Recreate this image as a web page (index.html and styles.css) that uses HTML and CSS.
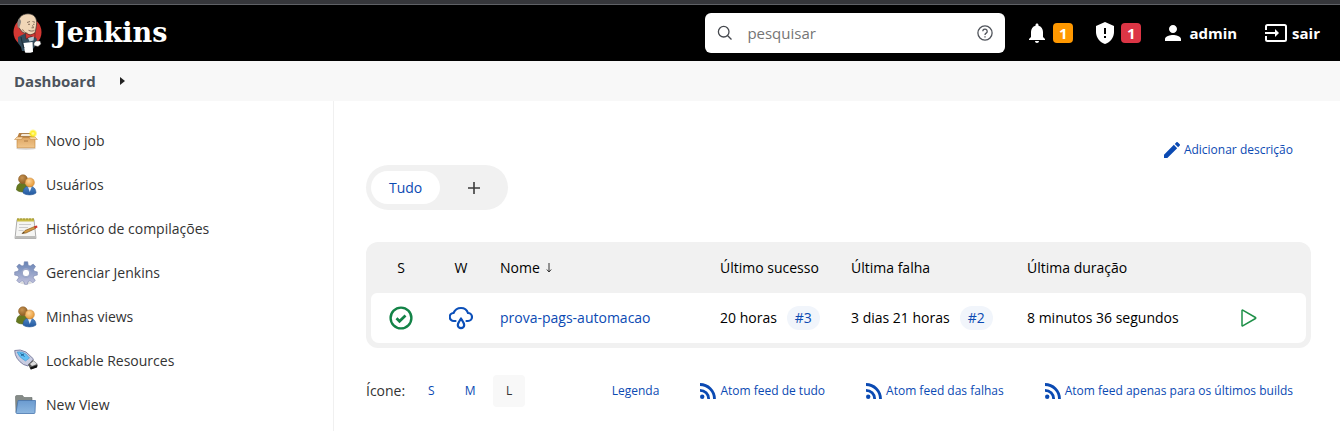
FILE: index.html
```html
<!DOCTYPE html>
<html lang="pt-BR">
<head>
<meta charset="utf-8">
<meta name="viewport" content="width=device-width, initial-scale=1">
<title>Dashboard [Jenkins]</title>
<link rel="stylesheet" href="styles.css">
</head>
<body>
<svg class="defs" width="0" height="0" aria-hidden="true">
  <defs>
    <radialGradient id="brown" cx=".4" cy=".35" r=".7"><stop offset="0" stop-color="#c99452"/><stop offset="1" stop-color="#8a5a1e"/></radialGradient>
    <radialGradient id="peach" cx=".4" cy=".35" r=".7"><stop offset="0" stop-color="#ffd596"/><stop offset="1" stop-color="#e3932f"/></radialGradient>
    <linearGradient id="blue" x1="0" y1="0" x2="0" y2="1"><stop offset="0" stop-color="#4d85c4"/><stop offset="1" stop-color="#2359a0"/></linearGradient>
    <linearGradient id="folder" x1="0" y1="0" x2="0" y2="1"><stop offset="0" stop-color="#6b9bd0"/><stop offset="1" stop-color="#8db7e0"/></linearGradient>
    <linearGradient id="steel" x1="0" y1="0" x2="0" y2="1"><stop offset="0" stop-color="#6683b5"/><stop offset="1" stop-color="#c3c2dc"/></linearGradient>
    <linearGradient id="carton" x1="0" y1="0" x2="0" y2="1"><stop offset="0" stop-color="#dda664"/><stop offset="1" stop-color="#f1c68b"/></linearGradient>
    <radialGradient id="glow"><stop offset="0" stop-color="#fffbb0"/><stop offset=".5" stop-color="#ffee20"/><stop offset="1" stop-color="#ffee20" stop-opacity="0"/></radialGradient>
    <symbol id="people" viewBox="0 0 24 24">
      <path d="M2.500 17c0-4 1.500-7 5.500-7s6 3 6 7c-3 2.500-8.500 2.500-11.500 0z" fill="#66791f" stroke="#4b5f12" stroke-width=".6"/>
      <circle cx="9" cy="6.200" r="4.500" fill="url(#brown)" stroke="#8f6230" stroke-width=".5"/>
      <path d="M9 20c0-4.500 2.500-7 6.500-7s6.500 3 6.500 7c-3 2.500-10 2.500-13 0z" fill="url(#blue)" stroke="#2d5a97" stroke-width=".6"/>
      <path d="M14 14l1.800 5 1.800-5z" fill="#edf3fa"/>
      <circle cx="15.800" cy="9.500" r="4.600" fill="url(#peach)" stroke="#c98534" stroke-width=".5"/>
    </symbol>
    <symbol id="rss" viewBox="0 0 16 16">
      <circle cx="2.200" cy="13.800" r="2.200"/>
      <path d="M0 7.300c4.800 0 8.700 3.900 8.700 8.700M0 1.500C8 1.500 14.500 8 14.500 16" fill="none" stroke="currentColor" stroke-width="2.800"/>
    </symbol>
  </defs>
</svg>

<div class="window-edge"></div>
<header class="header">
  <a class="brand" href="#">
    <svg width="29" height="40" viewBox="0 0 29 40" aria-hidden="true">
      <ellipse cx="14.500" cy="19" rx="14" ry="14.500" fill="#d33833"/>
      <path d="M5 24l6-3 9 1 4 4-1 6-3 4v2H9l-1-4-3-4z" fill="#334c5c"/>
      <path d="M5.500 14C3.500 5 9 .8 15 .8c6 0 9.500 4.200 8.500 11.200l-1 6c-1 4-4 4.500-7.500 3.500-4-1-7-3-8-5.500z" fill="#f0d6b7" stroke="#33302e" stroke-width=".7"/>
      <path d="M6 5.500c2.500 1.500 2.500 3.500 1.500 5.500l-1 3-1.500 1C4 11 4 8 6 5.500z" fill="#8e8a85"/>
      <path d="M14 9.500l3-1m2.500 0l2.500.8m-7 2h2m3 0h1.500m-2 1l1 2.500h-2m-3 2.500c2 1 4.500 1 6 0m-12-1c1 2.500 3 3.500 5 4" fill="none" stroke="#6b5546" stroke-width=".8"/>
      <path d="M12.500 20l4.500 2 5-2v5l-4-1.500-5 2.500z" fill="#d33833" stroke="#421c19" stroke-width=".5"/>
      <path d="M15 25l6-1.500-.5 4-4 1z" fill="#b6c7d0"/>
      <path d="M10.500 30l9-1 .5 10c-3 1-6 1-8 .5z" fill="#fff"/>
      <path d="M21 30l2-2h4l1 3-3 2.500-4-1z" fill="#fff" stroke="#555" stroke-width=".5"/>
      <path d="M8 24l1.500 7 1.500 4" fill="none" stroke="#1d2c37"/>
    </svg>
    <span>Jenkins</span>
  </a>
  <form class="search" role="search">
    <svg width="16" height="16" viewBox="0 0 16 16" fill="none" stroke="#45484e" stroke-width="1.300" aria-hidden="true"><circle cx="6.700" cy="6.700" r="5.300"/><path d="M10.700 10.700L14.500 14.500"/></svg>
    <input type="search" placeholder="pesquisar" aria-label="pesquisar">
    <a href="#" aria-label="Ajuda"><svg width="16" height="16" viewBox="0 0 16 16" fill="none" stroke="#50545b" stroke-width="1.300"><circle cx="8" cy="8" r="7.100"/><path d="M5.800 6.300a2.200 2.200 0 1 1 3.400 1.800C8.300 8.700 8 9 8 9.900"/><path d="M8 11.200v1.300"/></svg></a>
  </form>
  <nav class="account">
    <a class="alert" href="#" aria-label="Notificações">
      <svg width="16" height="20" viewBox="4 2 16 20" fill="#fff"><path d="M12 22c1.100 0 2-.9 2-2h-4c0 1.100.9 2 2 2zm6-6v-5c0-3.070-1.640-5.640-4.500-6.320V4c0-.83-.67-1.500-1.500-1.500s-1.500.67-1.500 1.500v.68C7.630 5.360 6 7.920 6 11v5l-2 2v1h16v-1l-2-2z"/></svg>
      <span class="badge warning">1</span>
    </a>
    <a class="alert shield" href="#" aria-label="Alertas de segurança">
      <svg width="20" height="22" viewBox="0 0 20 22"><path d="M10 0L1 4v6c0 5.500 3.800 10.700 9 12 5.200-1.300 9-6.500 9-12V4z" fill="#fff"/><path d="M9 6h2v6H9zm0 8h2v2H9z" fill="#000"/></svg>
      <span class="badge danger">1</span>
    </a>
    <a class="user" href="#"><svg width="16" height="16" viewBox="4 4 16 16" fill="#fff" aria-hidden="true"><path d="M12 12c2.210 0 4-1.790 4-4s-1.790-4-4-4-4 1.790-4 4 1.790 4 4 4zm0 2c-2.670 0-8 1.340-8 4v2h16v-2c0-2.660-5.330-4-8-4z"/></svg>admin</a>
    <a class="logout" href="#"><svg width="22" height="18" viewBox="0 0 22 18" fill="none" stroke="#fff" stroke-width="2" aria-hidden="true"><path d="M1 6V2.500Q1 1 2.500 1h17Q21 1 21 2.500v13q0 1.500-1.500 1.500h-17Q1 17 1 15.500V12M0 9h13"/><path d="M10 5l4 4-4 4z" fill="#fff" stroke="none"/></svg>sair</a>
  </nav>
</header>
<nav class="breadcrumb" aria-label="Trilha">
  <a href="#">Dashboard</a>
  <svg width="5" height="8" viewBox="0 0 5 8" aria-hidden="true"><path d="M0 0l5 4-5 4z" fill="#222"/></svg>
</nav>

<div class="layout">
  <aside class="sidebar">
    <ul class="tasks">
      <li><a href="#">
        <svg width="24" height="24" viewBox="0 0 24 24" aria-hidden="true"><ellipse cx="12" cy="19.500" rx="10" ry="1.500" fill="#ddd"/><path d="M5 4h14l2 5H3z" fill="#b98142"/><path d="M7.500 4.500h8.500l2 3H6z" fill="#f4e9d8" stroke="#925e23" stroke-width=".6"/><path d="M3 8.500h18v10.300H3z" fill="url(#carton)" stroke="#c08339" stroke-width=".6"/><path d="M3 8L.5 10.500h7L9 8zm18 0l2.500 2.500h-7L15 8z" fill="#f6d5a6" stroke="#c08339" stroke-width=".5"/><path d="M10 11h4v2h-4z" fill="#c9965a"/><circle cx="19" cy="4.500" r="4.500" fill="url(#glow)"/></svg>Novo job</a></li>
      <li><a href="#"><svg width="24" height="24" aria-hidden="true"><use href="#people"/></svg>Usuários</a></li>
      <li><a href="#">
        <svg width="24" height="24" viewBox="0 0 24 24" aria-hidden="true"><path d="M3 2.500h17l2 19H1z" fill="#f5f5f3" stroke="#999" stroke-width=".8"/><path d="M1.500 19h20l.5 2.500H1z" fill="#bcbcba"/><path d="M3 1.500h17v3H3z" fill="#c9bc45"/><path d="M4 1v2m3-2v2m3-2v2m3-2v2m3-2v2m3-2v2" stroke="#8b8230" stroke-width=".8"/><path d="M5 7.500h12M5 10.500h9M4.500 13.500h5" stroke="#ccc"/><path d="M8 16.500l3-3 9.500-4 1 2-9.500 4.500z" fill="#d49a45" stroke="#785016" stroke-width=".6"/><path d="M20 9.300l3-.8.5 2-2.500 1z" fill="#cf382e"/><path d="M8 16.500l2-1.500.5 1z" fill="#222"/></svg>Histórico de compilações</a></li>
      <li><a href="#">
        <svg width="24" height="24" viewBox="0 0 24 24" aria-hidden="true"><ellipse cx="12" cy="22" rx="6" ry="1.500" fill="#ddd"/><path fill-rule="evenodd" d="M10.300.8h3.400l.5 3.500 2 .8 3-2 2.300 2.400-2 2.900.8 1.900 3 .6v3.200l-3.200.6-.8 2 2 2.800-2.400 2.300-2.900-2-2 .8-.6 2.700h-2.800l-.7-2.700-1.900-.8-2.900 2-2.300-2.400 2-2.800-.8-1.900-3.300-.6v-3.200l3.300-.6.8-2-2-2.800L5.100 3.100l2.900 2 1.900-.8zM12 8.300a3.700 3.700 0 1 0 0 7.400 3.700 3.700 0 0 0 0-7.400z" fill="url(#steel)" stroke="#7583ad" stroke-width=".6"/><circle cx="12" cy="12" r="4.500" fill="none" stroke="#99a5ca"/></svg>Gerenciar Jenkins</a></li>
      <li><a href="#"><svg width="24" height="24" aria-hidden="true"><use href="#people"/></svg>Minhas views</a></li>
      <li><a href="#">
        <svg width="24" height="24" viewBox="0 0 24 24" aria-hidden="true"><path d="M.7 1.500Q6-.2 12 3l7.500 7-5.500 7-4.500-1.500Q1 10 .7 1.500z" fill="#c9cce0" stroke="#666990" stroke-width=".8"/><path d="M3 3q5-1 9 2l3.500 4-4 3Q5 8.500 3 3z" fill="#62c0f5" stroke="#3b8cc7" stroke-width=".5"/><path d="M6.500 4.500l4 3M7 6.500l3-1.500" stroke="#124b7d" stroke-width=".8"/><path d="M14 15.500l5-4.500 4.500 4-.5 3-6.500 2.500z" fill="#5c5c5c"/><path d="M16 15l3.500-3 3.500 3-5 2z" fill="#ddd"/><path d="M16 18.500l7.500-2.500-.5 2.500-6 2z" fill="#111"/></svg>Lockable Resources</a></li>
      <li><a href="#">
        <svg width="24" height="24" viewBox="0 0 24 24" aria-hidden="true"><path d="M1.500 4q0-1.500 1-1.500h6l1.500 2h8v15h-16z" fill="#858b88" stroke="#636966" stroke-width=".6"/><path d="M4 7.500h17.500L21 19.500q0 1-1 1H3q-1 0-1-1z" fill="url(#folder)" stroke="#4875ad" stroke-width=".8"/></svg>New View</a></li>
    </ul>
  </aside>

  <main class="main">
    <div class="description"><a href="#"><svg width="16" height="16" viewBox="3 3 18 18" fill="currentColor" aria-hidden="true"><path d="M3 17.250V21h3.750L17.810 9.940l-3.750-3.750L3 17.250zM20.710 7.040a1 1 0 0 0 0-1.410l-2.340-2.340a1 1 0 0 0-1.410 0l-1.830 1.830 3.750 3.750 1.830-1.830z"/></svg>Adicionar descrição</a></div>
    <nav class="tabs" aria-label="Views">
      <a class="tab active" href="#">Tudo</a>
      <a class="tab" href="#" aria-label="New View"><svg width="12" height="12" viewBox="0 0 12 12"><path d="M6 0v12M0 6h12" stroke="#3c3c3c" stroke-width="1.600"/></svg></a>
    </nav>
    <div class="jobs">
      <table>
        <colgroup><col class="icon"><col class="icon"><col><col class="success"><col class="failure"><col class="duration"><col class="action"></colgroup>
        <thead><tr><th class="center">S</th><th class="center">W</th><th><span class="sort">Nome <svg width="6" height="10" viewBox="0 0 6 10" fill="none" stroke="#333" aria-hidden="true"><path d="M3 0v9M.8 6.500L3 9l2.200-2.500"/></svg></span></th><th>Último sucesso</th><th>Última falha</th><th>Última duração</th><th></th></tr></thead>
        <tbody><tr>
          <td class="center"><svg width="24" height="24" viewBox="0 0 24 24" fill="none" stroke="#138347" role="img" aria-label="Sucesso"><circle cx="12" cy="12" r="10.400" stroke-width="2.400"/><path d="M7.500 12.300l3 3 6-5.800" stroke-width="2.700"/></svg></td>
          <td class="center"><svg width="24" height="24" viewBox="0 0 24 24" fill="none" stroke="#0b4fb9" stroke-width="2.200" stroke-linecap="round" role="img" aria-label="Chuva"><path d="M6.500 15H5a4 4 0 0 1-.5-8C6 3.500 8.500 2 12 2s6 2 7 5a4 4 0 0 1 0 8h-1.500"/><path d="M12 12.500c-2 3-3.200 4.500-3.200 6.500a3.200 3.200 0 0 0 6.400 0c0-2-1.200-3.500-3.200-6.500z" stroke-linejoin="round"/></svg></td>
          <td><a href="#">prova-pags-automacao</a></td>
          <td>20 horas<a class="build" href="#">#3</a></td>
          <td>3 dias 21 horas<a class="build" href="#">#2</a></td>
          <td>8 minutos 36 segundos</td>
          <td class="center"><button class="run" type="button" aria-label="Agendar build"><svg width="16" height="18" viewBox="0 0 16 18" fill="none" stroke="#1e9048" stroke-width="1.500" stroke-linejoin="round"><path d="M1 1.500v15q0 .7.700.3L14.500 9.500q.7-.5 0-1L1.700 1.200Q1 .8 1 1.500z"/></svg></button></td>
        </tr></tbody>
      </table>
    </div>
    <footer class="legend">
      <div class="sizes"><span>Ícone:</span><a href="#">S</a><a href="#">M</a><span class="current">L</span></div>
      <div class="feeds">
        <a href="#">Legenda</a>
        <a href="#"><svg width="16" height="16" fill="currentColor" aria-hidden="true"><use href="#rss"/></svg>Atom feed de tudo</a>
        <a href="#"><svg width="16" height="16" fill="currentColor" aria-hidden="true"><use href="#rss"/></svg>Atom feed das falhas</a>
        <a href="#"><svg width="16" height="16" fill="currentColor" aria-hidden="true"><use href="#rss"/></svg>Atom feed apenas para os últimos builds</a>
      </div>
    </footer>
  </main>
</div>
</body>
</html>
```
FILE: styles.css
```css
* { box-sizing: border-box; }
body {
  margin: 0;
  min-height: 100vh;
  display: flex;
  flex-direction: column;
  background: #fff;
  color: #333;
  font: 500 14px/20px "Open Sans", "Noto Sans", sans-serif;
}
a { color: #0b4ab3; text-decoration: none; }
svg { display: block; flex: none; }
.defs { position: absolute; }

.window-edge { height: 5px; background: #35363a; border-bottom: 1px solid #5f6166; }
.header {
  display: flex;
  align-items: center;
  height: 56px;
  padding: 0 20px 0 13px;
  background: #000;
}
.header a { color: #fff; }
.brand {
  display: flex;
  align-items: center;
  gap: 12px;
  margin-right: auto;
  font: bold 27px/36px "DejaVu Serif", serif;
}
.search {
  display: flex;
  align-items: center;
  width: 300px;
  height: 40px;
  padding: 0 12px;
  background: #fff;
  border-radius: 6px;
}
.search input {
  flex: 1;
  min-width: 0;
  padding: 0 14px;
  border: 0;
  outline: 0;
  background: none;
  color: #333;
  font: 400 15px/24px "Open Sans", "Noto Sans", sans-serif;
}
.search input::placeholder { color: #757575; }
.account {
  display: flex;
  align-items: center;
  margin-left: 24px;
  font-size: 15px;
  font-weight: 700;
}
.account a { display: flex; align-items: center; gap: 8px; }
.account .shield { gap: 6px; margin-left: 22px; }
.account .user { margin-left: 24px; }
.account .logout { gap: 5px; margin-left: 28px; }
.badge {
  width: 20px;
  border-radius: 4px;
  text-align: center;
}
.warning { background: #ff9800; }
.danger { background: #dc3545; }

.breadcrumb {
  display: flex;
  align-items: center;
  gap: 24px;
  height: 40px;
  padding-left: 14px;
  background: #f8f8f8;
  font-size: 15px;
  font-weight: 700;
}
.breadcrumb a { color: #4d545d; }

.layout { display: flex; flex: 1; }
.sidebar { width: 334px; flex: none; padding: 18px 14px 0; border-right: 1px solid #f0f0f0; }
.tasks { margin: 0; padding: 0; list-style: none; }
.tasks a { display: flex; align-items: center; gap: 8px; height: 44px; color: #333; }

.main { flex: 1; min-width: 0; padding: 39px 29px 0 32px; }
.description { display: flex; justify-content: flex-end; padding-right: 18px; font-size: 12px; }
.description a, .feeds a { display: flex; align-items: center; gap: 4px; }
.tabs {
  display: inline-flex;
  gap: 5px;
  margin-top: 5px;
  padding: 6px 5px;
  background: #f1f1f1;
  border-radius: 23px;
}
.tab {
  display: flex;
  align-items: center;
  justify-content: center;
  min-width: 58px;
  height: 33px;
  padding: 0 18px;
  border-radius: 17px;
}
.tab.active { background: #fff; }

.jobs { margin-top: 32px; padding: 0 5px 5px; background: #f1f1f1; border-radius: 12px; }
.jobs table { width: 100%; table-layout: fixed; border-spacing: 0; color: #000; }
.icon { width: 60px; }
.success { width: 131px; }
.failure { width: 176px; }
.duration { width: 174px; }
.action { width: 114px; }
.jobs th, .jobs td { padding: 0 0 0 9px; text-align: left; font-weight: 500; white-space: nowrap; }
.jobs th { height: 51px; }
.jobs td { height: 50px; background: #fff; }
.jobs td:first-child { border-radius: 6px 0 0 8px; }
.jobs td:last-child { border-radius: 0 6px 8px 0; }
.jobs .center { padding: 0; text-align: center; }
.center svg { margin: 0 auto; }
.sort { display: flex; align-items: center; gap: 6px; }
.build {
  display: inline-block;
  margin-left: 10px;
  padding: 2px 8px;
  background: #f1f5fb;
  border-radius: 12px;
}
.run { padding: 4px; border: 0; background: none; cursor: pointer; }

.legend { display: flex; align-items: center; justify-content: space-between; margin-top: 27px; padding-right: 18px; font-size: 12px; }
.sizes, .feeds { display: flex; align-items: center; }
.sizes > :first-child { margin-right: 10px; font-size: 14px; font-weight: 400; }
.sizes a, .current { width: 32px; margin-right: 7px; padding: 6px 0; border-radius: 4px; text-align: center; }
.current { background: #f8f8f8; }
.feeds { gap: 41px; }
```
